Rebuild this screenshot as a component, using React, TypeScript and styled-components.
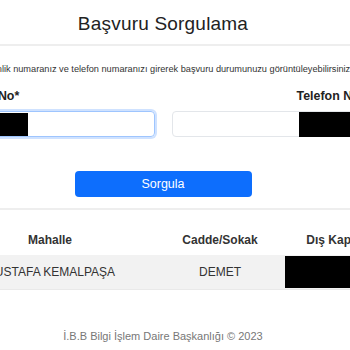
import React from "react";
import styled, { createGlobalStyle } from "styled-components";

const GlobalStyle = createGlobalStyle`
  html, body {
    margin: 0;
    padding: 0;
    background: #fff;
    overflow: hidden;
  }
  body {
    font-family: "Liberation Sans", Arial, sans-serif;
    color: #222;
  }
`;

// the screenshot shows a window onto a wider page, centred at x=163
const Page = styled.div`
  width: 900px;
  margin-left: -287px;
  display: flex;
  flex-direction: column;
  align-items: center;
`;

const Title = styled.h1`
  margin: 0;
  padding-top: 13px;
  height: 31px;
  font-size: 19px;
  font-weight: 400;
  color: #222;
  letter-spacing: 0.2px;
`;

const Rule = styled.hr<{ $top: number }>`
  width: 100%;
  margin: ${(p) => p.$top}px 0 0;
  border: 0;
  border-top: 2px solid #eeeeee;
`;

const Lead = styled.p`
  margin: 18px 0 0 -6px;
  font-size: 9.2px;
  color: #333;
  white-space: nowrap;
`;

const Form = styled.div`
  margin-top: 15px;
  display: grid;
  grid-template-columns: 358px 358px;
  column-gap: 17px;
`;

const Group = styled.div`
  display: flex;
  flex-direction: column;
  align-items: center;
`;

const Label = styled.label`
  font-size: 12.4px;
  font-weight: 700;
  color: #222;
  height: 14px;
  line-height: 14px;
`;

const Field = styled.div<{ $focus?: boolean }>`
  margin-top: 8px;
  box-sizing: border-box;
  width: 100%;
  height: 26px;
  border-radius: 4px;
  border: 1px solid ${(p) => (p.$focus ? "#9ec5fe" : "#e3e6ea")};
  box-shadow: ${(p) => (p.$focus ? "0 0 0 2px #cfe2ff" : "none")};
  display: flex;
  align-items: center;
  justify-content: center;
`;

const Redacted = styled.span<{ $w: number; $h: number }>`
  display: block;
  width: ${(p) => p.$w}px;
  height: ${(p) => p.$h}px;
  background: #000;
`;

const Button = styled.button`
  margin-top: 34px;
  width: 177px;
  height: 26px;
  border: 0;
  border-radius: 4px;
  background: #0d6efd;
  color: #fff;
  font-family: "Liberation Sans", Arial, sans-serif;
  font-size: 12.5px;
  cursor: pointer;
`;

const Table = styled.div`
  margin-top: 11px;
  display: grid;
  grid-template-columns: 187px 220px 120px 120px 173px;
`;

const Head = styled.div`
  height: 34px;
  display: flex;
  align-items: center;
  justify-content: center;
  padding-top: 3px;
  box-sizing: border-box;
  font-size: 12px;
  font-weight: 700;
  color: #333;
`;

const Cell = styled.div`
  height: 35px;
  box-sizing: border-box;
  padding-bottom: 1px;
  background: #f2f2f2;
  border-bottom: 1px solid #e9e9e9;
  display: flex;
  align-items: center;
  justify-content: center;
  font-size: 12px;
  color: #333;
`;

const Footer = styled.footer`
  margin-top: 40px;
  font-size: 11px;
  color: #777;
`;

export default function App() {
  return (
    <>
      <GlobalStyle />
      <Page>
        <Title>Başvuru Sorgulama</Title>
        <Rule $top={0} />
        <Lead>
          T.C. Kimlik numaranız ve telefon numaranızı girerek başvuru durumunuzu görüntüleyebilirsiniz.
        </Lead>
        <Form>
          <Group>
            <Label>T.C. Kimlik No*</Label>
            <Field $focus>
              <Redacted $w={104} $h={23} />
            </Field>
          </Group>
          <Group>
            <Label>Telefon Numarası*</Label>
            <Field>
              <Redacted $w={104} $h={25} />
            </Field>
          </Group>
        </Form>
        <Button>Sorgula</Button>
        <Rule $top={11} />
        <Table>
          <Head>İlçe</Head>
          <Head>Mahalle</Head>
          <Head>Cadde/Sokak</Head>
          <Head>Dış Kapı No</Head>
          <Head>Durum</Head>
          <Cell>KADIKÖY</Cell>
          <Cell>MUSTAFA KEMALPAŞA</Cell>
          <Cell>DEMET</Cell>
          <Cell>
            <Redacted $w={110} $h={32} />
          </Cell>
          <Cell>-</Cell>
        </Table>
        <Footer>İ.B.B Bilgi İşlem Daire Başkanlığı © 2023</Footer>
      </Page>
    </>
  );
}
